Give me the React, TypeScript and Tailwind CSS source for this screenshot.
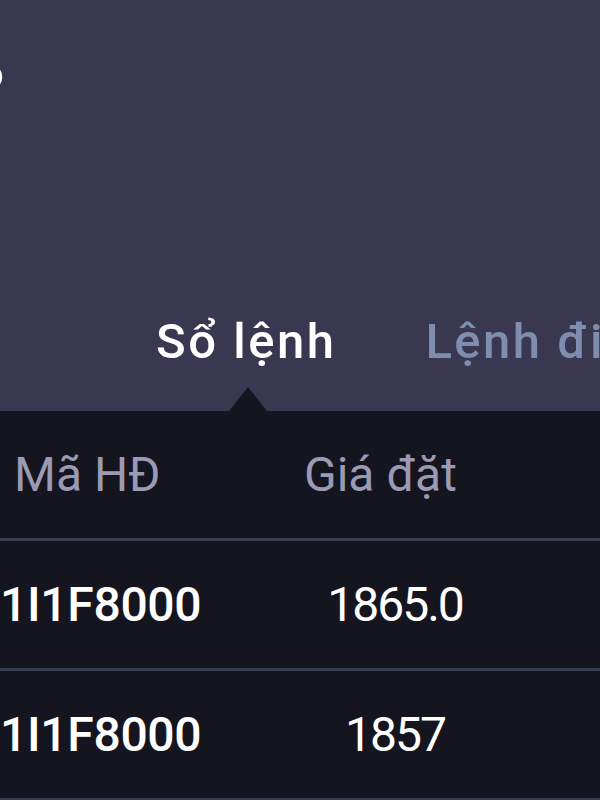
import React from "react";

const font = { fontFamily: "Roboto, 'Noto Sans', sans-serif" };

function Row({ code, price }: { code: string; price: string }) {
  return (
    <>
      <div className="flex h-[127px] items-center">
        <div className="w-[300px] text-[48px] font-medium text-white leading-none tracking-[-0.3px]">{code}</div>
        <div className="w-[190px] text-center text-[48px] text-white leading-none tracking-[-2px]">{price}</div>
      </div>
      <div className="h-[3px] bg-[#393d50]" />
    </>
  );
}

export default function App() {
  return (
    <div className="w-[600px] h-[800px] overflow-hidden bg-[#15151f]" style={font}>
      <div className="relative h-[411px] bg-[#3a3851] flex flex-col">
        <div className="pt-[63px] h-[120px]">
          <svg width="28" height="28" viewBox="0 0 28 28" className="-ml-[25px]">
            <ellipse cx="14" cy="14" rx="12" ry="12" fill="none" stroke="#ffffff" strokeWidth="2.5" />
          </svg>
        </div>
        <div className="flex-1" />
        <div className="flex items-end pb-[45px] text-[49px] leading-[49px] font-medium whitespace-nowrap tracking-[2.5px]">
          <div className="w-[4px] overflow-hidden flex justify-end text-[#5d6585]">
            <span className="shrink-0">Tài sản</span>
          </div>
          <div className="ml-[156px] text-white">Sổ lệnh</div>
          <div className="ml-[89px] text-[#7f8eaf]">Lệnh điều kiện</div>
        </div>
        <svg width="38" height="24" viewBox="0 0 38 24" className="absolute left-[229px] bottom-0">
          <polygon points="19,0 38,24 0,24" fill="#15151f" />
        </svg>
      </div>
      <div className="flex h-[127px] items-center">
        <div className="w-[300px] pl-[14px] text-[48px] text-[#9b9ab4] leading-none">Mã HĐ</div>
        <div className="pl-[4px] text-[48px] text-[#9b9ab4] leading-none">Giá đặt</div>
      </div>
      <div className="h-[3px] bg-[#393d50]" />
      <Row code="1I1F8000" price="1865.0" />
      <Row code="1I1F8000" price="1857" />
    </div>
  );
}
